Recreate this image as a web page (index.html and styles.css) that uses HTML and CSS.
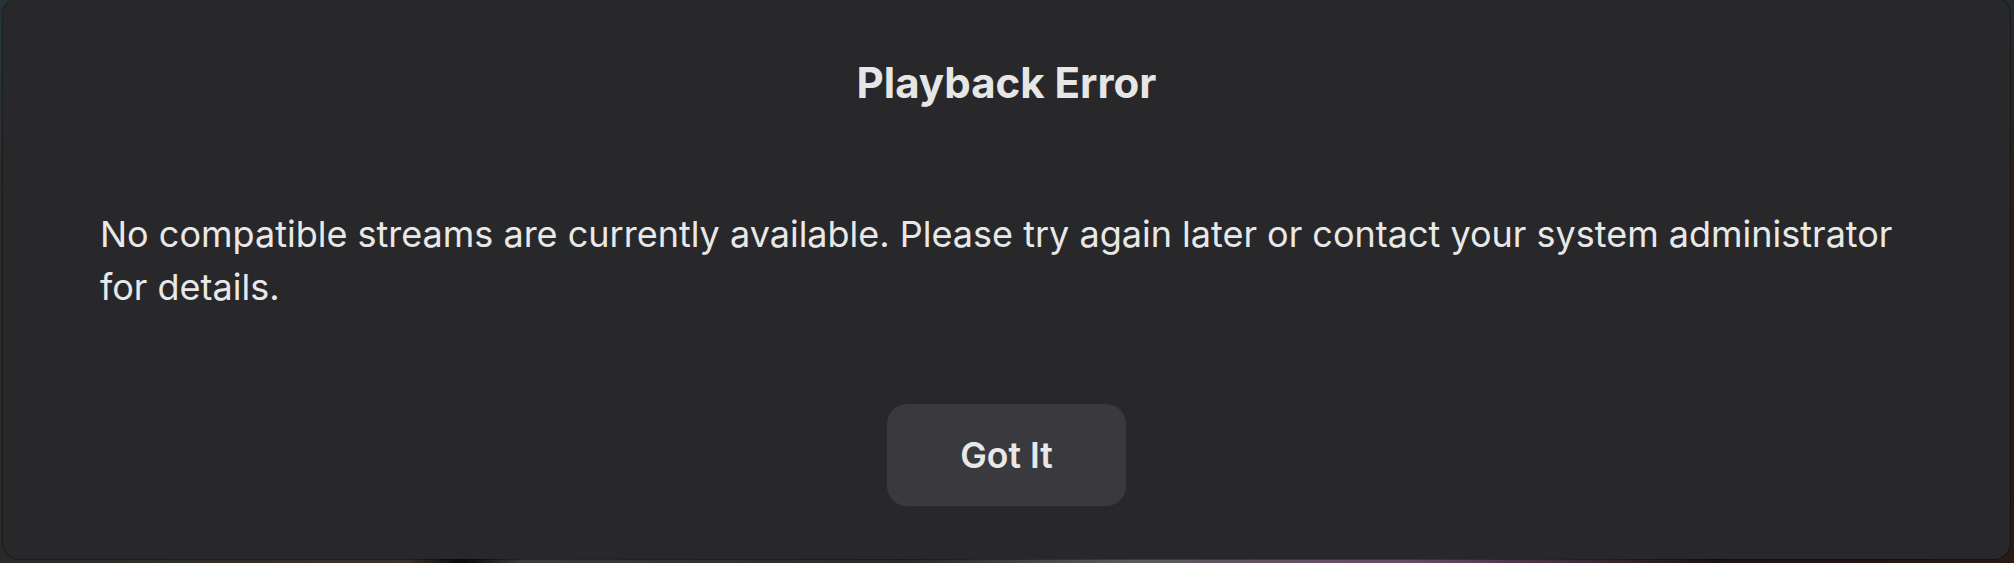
FILE: index.html
```html
<!DOCTYPE html>
<html lang="en">
<head>
    <meta charset="UTF-8">
    <meta name="viewport" content="width=device-width, initial-scale=1.0">
    <title>Playback Error</title>
    <link rel="stylesheet" href="styles.css">
</head>
<body>
    <div class="backdrop">
        <div class="dialog" role="alertdialog" aria-labelledby="dialogTitle">
            <h2 id="dialogTitle" class="dialog-title">Playback Error</h2>
            <p class="dialog-message">No compatible streams are currently available. Please try again later or contact your system administrator for details.</p>
            <button class="dialog-button">Got It</button>
        </div>
    </div>
</body>
</html>
```

FILE: styles.css
```css
html, body {
    margin: 0;
    padding: 0;
    height: 100%;
    overflow: hidden;
}
body {
    font-family: Inter, "Noto Sans", sans-serif;
    background: linear-gradient(90deg, #2b2a28 0%, #3a3129 20%, #0b0a0a 23%, #3d3a3a 26%, #2c2729 45%, #5a5a5c 56%, #6a4a66 70%, #1b1416 85%, #2a1a14 100%);
}
.backdrop {
    height: 100%;
    padding: 0 4px 0 3px;
    box-sizing: border-box;
    background: linear-gradient(180deg, rgba(30, 60, 70, 0.5) 0%, rgba(40, 35, 30, 0.2) 40%, rgba(0, 0, 0, 0) 100%);
}
.dialog {
    margin-top: -2px;
    height: 561px;
    box-sizing: border-box;
    padding: 61px 97px 0;
    background: #28282a;
    border-radius: 16px;
    box-shadow: 0 0 0 1px rgba(0, 0, 0, 0.35);
    display: flex;
    flex-direction: column;
    color: #e8e8e9;
}
.dialog-title {
    margin: 0;
    font-size: 42px;
    line-height: 48px;
    font-weight: 700;
    text-align: center;
    color: #e6e6e7;
}
.dialog-message {
    margin: 101px 0 0;
    font-size: 36px;
    line-height: 52.5px;
    font-weight: 400;
}
.dialog-button {
    align-self: center;
    margin-top: 91px;
    height: 102px;
    padding: 0 73px;
    border: none;
    border-radius: 20px;
    background: #3a3a3e;
    color: #e8e8e9;
    font-family: inherit;
    font-size: 35.5px;
    font-weight: 600;
    cursor: pointer;
}
.dialog-button:hover {
    background: #45454a;
}
```
